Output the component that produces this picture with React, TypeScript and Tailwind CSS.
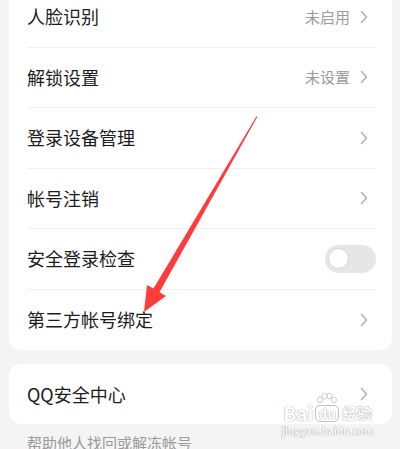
import React from "react";

const Chevron = () => (
  <svg width="8" height="14" viewBox="0 0 8 14" className="shrink-0">
    <polyline points="1.5,1.5 6.5,7 1.5,12.5" fill="none" stroke="#b3b3b3" strokeWidth="1.6" strokeLinecap="round" strokeLinejoin="round" />
  </svg>
);

const Toggle = () => (
  <div className="w-[51px] h-[28px] rounded-full bg-[#e6e6e6] flex items-center px-[3px]">
    <div className="w-[21px] h-[21px] rounded-full bg-white border border-[#d6d6d6]"></div>
  </div>
);

type RowProps = { title: string; value?: string; toggle?: boolean; last?: boolean };

const Row = ({ title, value, toggle, last }: RowProps) => (
  <div className="pl-[18px] pr-[16px]">
    <div className={"h-[60.5px] flex items-center justify-between " + (last ? "" : "border-b border-[#efefef]")}>
      <span className="text-[18px] text-[#1c1c1c]">{title}</span>
      {toggle ? (
        <Toggle />
      ) : (
        <div className="flex items-center gap-[10px] pr-[8px]">
          {value && <span className="text-[15px] text-[#9a9a9a]">{value}</span>}
          <Chevron />
        </div>
      )}
    </div>
  </div>
);

const Watermark = () => (
  <div className="absolute left-[282px] top-[392px] flex flex-col items-center select-none">
    <div className="flex items-end text-white font-bold [text-shadow:0_0_1px_#a0a0a0,0_0_1px_#a0a0a0]">
      <span className="text-[19px] leading-[19px]">Bai</span>
      <div className="mx-[2px] flex flex-col items-center">
        <svg width="24" height="14" viewBox="0 0 24 14" className="mb-[-1px]">
          <g fill="white" stroke="#c0c0c0" strokeWidth="0.8">
            <ellipse cx="5" cy="8" rx="2.5" ry="3" />
            <ellipse cx="9.5" cy="4" rx="2.5" ry="3" />
            <ellipse cx="14.5" cy="4" rx="2.5" ry="3" />
            <ellipse cx="19" cy="8" rx="2.5" ry="3" />
          </g>
        </svg>
        <span className="text-[14px] leading-[15px] px-[2px] rounded-[5px] border border-[#c0c0c0]">du</span>
      </div>
      <span className="text-[15px] leading-[18px] ml-[1px]">经验</span>
    </div>
    <span className="text-[10px] leading-[12px] mt-[3px] text-white font-bold [text-shadow:0_0_1px_#a0a0a0,0_0_1px_#a0a0a0]">jingyan.baidu.com</span>
  </div>
);

const App = () => {
  return (
    <div className="relative w-[400px] h-[449px] overflow-hidden bg-[#f4f4f4] font-['Noto_Sans_CJK_SC','Noto_Sans',sans-serif]">
      <div className="ml-[9px] mr-[8px] -mt-[13px] bg-white rounded-[12px]">
        <Row title="人脸识别" value="未启用" />
        <Row title="解锁设置" value="未设置" />
        <Row title="登录设备管理" />
        <Row title="帐号注销" />
        <Row title="安全登录检查" toggle />
        <Row title="第三方帐号绑定" last />
      </div>

      <div className="ml-[9px] mr-[8px] mt-[14px] bg-white rounded-[12px]">
        <div className="pl-[18px] pr-[16px] h-[60px] flex items-center justify-between">
          <span className="text-[18px] text-[#1c1c1c]">QQ安全中心</span>
          <div className="pr-[8px]">
            <Chevron />
          </div>
        </div>
      </div>

      <p className="px-[27px] mt-[9px] text-[15px] leading-[20px] text-[#9a9a9a]">帮助他人找回或解冻帐号</p>

      <Watermark />

      <svg className="absolute left-0 top-0 pointer-events-none" width="400" height="449" viewBox="0 0 400 449">
        <polygon
          points="257.5,116.5 159.5,292.2 166,296 144,312 147,285 153.5,288.6 256.5,116.2"
          fill="#ff3c3c"
        />
      </svg>
    </div>
  );
};

export default App;
